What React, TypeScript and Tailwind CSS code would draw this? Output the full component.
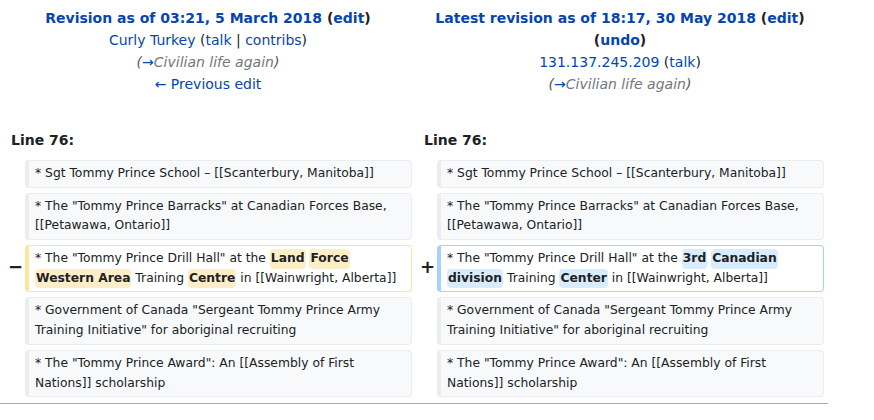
import React from 'react';

const link = 'text-[#0645ad]';

const Cell: React.FC<{ kind?: 'ctx' | 'del' | 'add'; children: React.ReactNode }> = ({ kind = 'ctx', children }) => {
  const border =
    kind === 'del' ? 'border-[#ffe49c] bg-white' : kind === 'add' ? 'border-[#a3d3ff] bg-white' : 'border-[#eaecf0] bg-[#f8f9fa]';
  return (
    <div className={`border border-l-4 rounded-[4px] px-[6px] py-[3px] text-[12.32px] leading-[1.6] ${border}`}>{children}</div>
  );
};

const Del: React.FC<{ children: React.ReactNode }> = ({ children }) => (
  <span className="inline-block align-top font-bold bg-[#feeec8] rounded-[4px] px-[1px]">{children}</span>
);

const Ins: React.FC<{ children: React.ReactNode }> = ({ children }) => (
  <span className="inline-block align-top font-bold bg-[#d8ecff] rounded-[4px] px-[1px]">{children}</span>
);

const Marker: React.FC<{ children?: React.ReactNode }> = ({ children }) => (
  <div className="flex items-center justify-end text-[18px] font-bold -mr-[2px]">{children}</div>
);

const App: React.FC = () => {
  const rows: { left: React.ReactNode; right: React.ReactNode; changed?: boolean }[] = [
    {
      left: '* Sgt Tommy Prince School – [[Scanterbury, Manitoba]]',
      right: '* Sgt Tommy Prince School – [[Scanterbury, Manitoba]]',
    },
    {
      left: '* The "Tommy Prince Barracks" at Canadian Forces Base, [[Petawawa, Ontario]]',
      right: '* The "Tommy Prince Barracks" at Canadian Forces Base, [[Petawawa, Ontario]]',
    },
    {
      changed: true,
      left: (
        <>
          * The "Tommy Prince Drill Hall" at the <Del>Land</Del> <Del>Force</Del> <Del>Western Area</Del> Training{' '}
          <Del>Centre</Del> in [[Wainwright, Alberta]]
        </>
      ),
      right: (
        <>
          * The "Tommy Prince Drill Hall" at the <Ins>3rd</Ins> <Ins>Canadian</Ins> <Ins>division</Ins> Training{' '}
          <Ins>Center</Ins> in [[Wainwright, Alberta]]
        </>
      ),
    },
    {
      left: '* Government of Canada "Sergeant Tommy Prince Army Training Initiative" for aboriginal recruiting',
      right: '* Government of Canada "Sergeant Tommy Prince Army Training Initiative" for aboriginal recruiting',
    },
    {
      left: '* The "Tommy Prince Award": An [[Assembly of First Nations]] scholarship',
      right: '* The "Tommy Prince Award": An [[Assembly of First Nations]] scholarship',
    },
  ];

  return (
    <div className="w-[874px] h-[420px] bg-white font-['DejaVu_Sans',sans-serif] text-[#202122]">
      <div className="w-[828px] border-b border-[#a2a9b1] pb-[6px]">
        <div className="grid grid-cols-[17px_387px_17px_387px] gap-x-[4px] px-[4px]">
          {/* Revision headers */}
          <div className="col-span-2 pt-[7px] text-center text-[14px] leading-[22px]">
            <div className="font-bold">
              <span className={link}>Revision as of 03:21, 5 March 2018</span> (<span className={link}>edit</span>)
            </div>
            <div>
              <span className={link}>Curly Turkey</span> (<span className={link}>talk</span> |{' '}
              <span className={link}>contribs</span>)
            </div>
            <div className="italic">
              <span className="text-[#54595d]">(</span>
              <span className={link}>→</span>
              <span className="text-[#72777d]">Civilian life again</span>
              <span className="text-[#54595d]">)</span>
            </div>
            <div className={link}>← Previous edit</div>
          </div>
          <div className="col-span-2 pt-[7px] text-center text-[14px] leading-[22px]">
            <div className="font-bold">
              <span className={link}>Latest revision as of 18:17, 30 May 2018</span> (<span className={link}>edit</span>)
            </div>
            <div className="font-bold">
              (<span className={link}>undo</span>)
            </div>
            <div>
              <span className={link}>131.137.245.209</span> (<span className={link}>talk</span>)
            </div>
            <div className="italic">
              <span className="text-[#54595d]">(</span>
              <span className={link}>→</span>
              <span className="text-[#72777d]">Civilian life again</span>
              <span className="text-[#54595d]">)</span>
            </div>
          </div>

          {/* Line numbers */}
          <div className="col-span-2 mt-[34px] mb-[9px] pl-[7px] text-[14px] leading-[22px] font-bold">Line 76:</div>
          <div className="col-span-2 mt-[34px] mb-[9px] pl-[8px] text-[14px] leading-[22px] font-bold">Line 76:</div>

          {rows.map((row, i) => (
            <React.Fragment key={i}>
              <Marker>{row.changed ? '−' : null}</Marker>
              <div className={i > 0 ? 'mt-[5px]' : ''}>
                <Cell kind={row.changed ? 'del' : 'ctx'}>{row.left}</Cell>
              </div>
              <Marker>{row.changed ? '+' : null}</Marker>
              <div className={i > 0 ? 'mt-[5px]' : ''}>
                <Cell kind={row.changed ? 'add' : 'ctx'}>{row.right}</Cell>
              </div>
            </React.Fragment>
          ))}
        </div>
      </div>
    </div>
  );
};

export default App;
